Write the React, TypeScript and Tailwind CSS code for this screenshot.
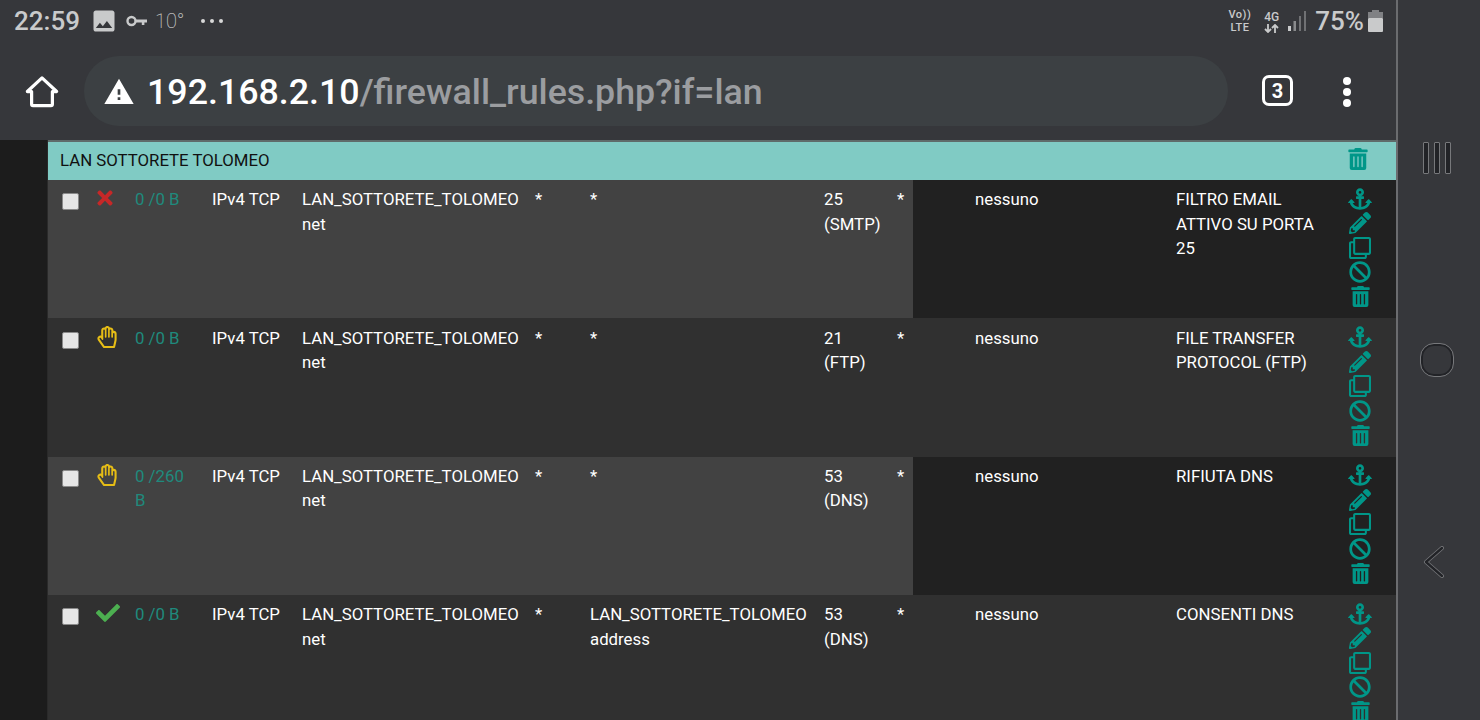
import { FaAnchor, FaBan, FaCheck, FaPencilAlt, FaRegClone, FaRegHandPaper, FaTimes, FaTrashAlt } from 'react-icons/fa';
import { MdImage, MdWarning } from 'react-icons/md';

type Rule = {
  action: 'block' | 'reject' | 'pass';
  states: string;
  dest: string[];
  port: string[];
  descr: string;
  highlight: boolean;
};

const rules: Rule[] = [
  { action: 'block', states: '0 /0 B', dest: ['*'], port: ['25', '(SMTP)'], descr: 'FILTRO EMAIL ATTIVO SU PORTA 25', highlight: true },
  { action: 'reject', states: '0 /0 B', dest: ['*'], port: ['21', '(FTP)'], descr: 'FILE TRANSFER PROTOCOL (FTP)', highlight: false },
  { action: 'reject', states: '0 /260 B', dest: ['*'], port: ['53', '(DNS)'], descr: 'RIFIUTA DNS', highlight: true },
  { action: 'pass', states: '0 /0 B', dest: ['LAN_SOTTORETE_TOLOMEO', 'address'], port: ['53', '(DNS)'], descr: 'CONSENTI DNS', highlight: false },
];

function ActionIcon({ action }: { action: Rule['action'] }) {
  if (action === 'block') return <FaTimes className="ml-[-2px] mt-[-1px] text-[#c62828]" size={22} />;
  if (action === 'reject') return <FaRegHandPaper className="mt-[-1px] text-[#e6bd16]" size={22} />;
  return <FaCheck className="mt-[-2px] text-[#4caf50]" size={24} />;
}

function RuleRow({ rule }: { rule: Rule }) {
  const left = rule.highlight ? 'bg-[#424242]' : 'bg-[#303030]';
  const right = rule.highlight ? 'bg-[#212121]' : 'bg-[#303030]';
  return (
    <div className="flex h-[138.33px] text-[16.8px] leading-[24.5px] text-white">
      <div className={`flex w-[865px] shrink-0 pt-[7.3px] ${left}`}>
        <div className="w-[48px] shrink-0 pl-[14px] pt-[6px]">
          <div className="h-[17px] w-[17px] rounded-[2px] border border-[#8a8a8a] bg-[#e6e6e6]" />
        </div>
        <div className="w-[39px] shrink-0 pt-[1px]">
          <ActionIcon action={rule.action} />
        </div>
        <div className="w-[77px] shrink-0 pr-[18px] text-[#1f8a7d]">{rule.states}</div>
        <div className="w-[90px] shrink-0">IPv4 TCP</div>
        <div className="w-[233px] shrink-0">
          <div>LAN_SOTTORETE_TOLOMEO</div>
          <div>net</div>
        </div>
        <div className="w-[55px] shrink-0">*</div>
        <div className="w-[234px] shrink-0">
          {rule.dest.map((line) => (
            <div key={line}>{line}</div>
          ))}
        </div>
        <div className="w-[73px] shrink-0">
          {rule.port.map((line) => (
            <div key={line}>{line}</div>
          ))}
        </div>
        <div className="w-[16px] shrink-0">*</div>
      </div>
      <div className={`flex flex-1 pt-[7.3px] ${right}`}>
        <div className="w-[263px] shrink-0 pl-[62px]">nessuno</div>
        <div className="w-[172px] shrink-0 pr-[18px]">{rule.descr}</div>
        <div className="ml-[1px] mt-[-1px] flex w-[22px] flex-col items-center text-[#009688]">
          <div className="flex h-[24.6px] items-center"><FaAnchor size={24} /></div>
          <div className="flex h-[24.6px] items-center"><FaPencilAlt size={22} /></div>
          <div className="flex h-[24.6px] items-center"><FaRegClone size={22} /></div>
          <div className="flex h-[24.6px] items-center"><FaBan size={22} /></div>
          <div className="flex h-[24.6px] items-center"><FaTrashAlt size={21} /></div>
        </div>
      </div>
    </div>
  );
}

function StatusBar() {
  return (
    <div className="flex h-[42px] items-center justify-between pl-[14px] pr-[13px] text-[#c9cacb]">
      <div className="flex items-center">
        <span className="text-[26px] font-medium">22:59</span>
        <MdImage size={28} className="ml-[10px]" />
        <svg width="22" height="12" viewBox="0 0 22 12" fill="none" className="ml-[8px]">
          <circle cx="5.5" cy="6" r="4" stroke="#c9cacb" strokeWidth="2.4" />
          <path d="M10 4.6h11v2.8h-2.6V10h-2.6V7.4H10z" fill="#c9cacb" />
        </svg>
        <span className="ml-[7px] text-[20px] font-thin text-[#e4e4e4]">10°</span>
        <span className="ml-[16px] flex gap-[5px]">
          <i className="h-[4px] w-[4px] rounded-full bg-[#d8d8d8]" />
          <i className="h-[4px] w-[4px] rounded-full bg-[#d8d8d8]" />
          <i className="h-[4px] w-[4px] rounded-full bg-[#d8d8d8]" />
        </span>
      </div>
      <div className="flex items-center">
        <div className="text-center text-[11px] font-medium leading-[13px] tracking-[0.5px]">
          <div>Vo))</div>
          <div>LTE</div>
        </div>
        <div className="ml-[13px] flex flex-col items-center">
          <span className="text-[12px] font-medium leading-[14px]">4G</span>
          <svg width="15" height="9" viewBox="0 0 15 9" fill="none" stroke="#c9cacb" strokeWidth="1.8">
            <path d="M4 0v8M1 5l3 3 3-3" />
            <path d="M11 9V1M8 4l3-3 3 3" />
          </svg>
        </div>
        <svg width="20" height="22" viewBox="0 0 20 22" className="ml-[9px]">
          <rect x="0" y="16" width="3" height="5" fill="#c9cacb" />
          <rect x="5.5" y="11" width="2.5" height="10" fill="#8a8b8d" />
          <rect x="11" y="6" width="2" height="15" fill="#707174" />
          <rect x="16" y="1" width="2" height="20" fill="#707174" />
        </svg>
        <span className="ml-[7px] text-[26px] font-medium">75%</span>
        <svg width="15" height="22" viewBox="0 0 15 22" className="ml-[4px]">
          <rect x="4" y="0" width="7" height="3" fill="#808184" />
          <rect x="0" y="2" width="15" height="6" fill="#808184" />
          <rect x="0" y="8" width="15" height="14" rx="1" fill="#c9cacb" />
        </svg>
      </div>
    </div>
  );
}

function AddressBar() {
  return (
    <div className="flex h-[98px] items-start">
      <svg width="34" height="34" viewBox="0 0 36 36" fill="none" stroke="white" strokeWidth="3.4" strokeLinejoin="round" className="ml-[25px] mt-[33px] shrink-0">
        <path d="M2.5 17.5 18 3l15.5 14.5H29V31a1.5 1.5 0 0 1-1.5 1.5h-19A1.5 1.5 0 0 1 7 31V17.5z" />
      </svg>
      <div className="ml-[25px] mt-[14px] flex h-[70px] w-[1144px] shrink-0 items-center rounded-full bg-[#3c4043] pl-[19px]">
        <MdWarning size={32} className="mt-[1px] text-white" />
        <span className="ml-[12px] mt-[3px] text-[35.75px] font-medium text-white">192.168.2.10</span>
        <span className="mt-[3px] text-[35.75px] font-medium text-[#9b9da0]">/firewall_rules.php?if=lan</span>
      </div>
      <div className="ml-[34px] mt-[33px] flex h-[31px] w-[31px] items-center justify-center rounded-[7px] border-[3px] border-white text-[20px] font-bold text-white">
        3
      </div>
      <div className="ml-[50px] mt-[35px] flex flex-col gap-[3px]">
        <i className="h-[8px] w-[8px] rounded-full bg-white" />
        <i className="h-[8px] w-[8px] rounded-full bg-white" />
        <i className="h-[8px] w-[8px] rounded-full bg-white" />
      </div>
    </div>
  );
}

function NavBar() {
  return (
    <div className="flex w-[84px] shrink-0 flex-col items-center border-l-2 border-[#6b6c6f] bg-[#36373b] pt-[142px]">
      <div className="ml-[-4px] flex gap-[5px]">
        <i className="h-[32px] w-[6px] rounded-[1px] border border-[#77787b] bg-[#222327]" />
        <i className="h-[32px] w-[6px] rounded-[1px] border border-[#77787b] bg-[#222327]" />
        <i className="h-[32px] w-[6px] rounded-[1px] border border-[#77787b] bg-[#222327]" />
      </div>
      <div className="ml-[-4px] mt-[170px] h-[32px] w-[32px] rounded-[13px] border-2 border-[#222327] outline outline-1 outline-[#77787b]" />
      <svg width="24" height="32" viewBox="0 0 24 32" fill="none" className="ml-[-11px] mt-[170px]">
        <path d="M20 2 4 16l16 14" stroke="#77787b" strokeWidth="4" strokeLinecap="round" strokeLinejoin="round" />
        <path d="M20 2 4 16l16 14" stroke="#222327" strokeWidth="2.4" strokeLinecap="round" strokeLinejoin="round" />
      </svg>
    </div>
  );
}

export default function App() {
  return (
    <div className="flex h-[720px] w-[1480px] overflow-hidden bg-[#1c1c1c] font-['Roboto',sans-serif]">
      <div className="flex w-[1396px] shrink-0 flex-col">
        <div className="h-[140px] shrink-0 bg-[#36373b]">
          <StatusBar />
          <AddressBar />
        </div>
        <div className="flex flex-1 overflow-hidden">
          <div className="w-[48px] shrink-0 border-r border-[#2a2a2a] bg-[#1c1c1c]" />
          <div className="flex-1 overflow-hidden border-t-2 border-[#5f6b6a]">
            <div className="flex h-[38px] items-center justify-between bg-[#80cbc4] pl-[12px] pr-[27px] text-[16.8px] text-[#111]">
              <span>LAN SOTTORETE TOLOMEO</span>
              <FaTrashAlt size={22} className="mt-[-4px] text-[#009688]" />
            </div>
            {rules.map((rule) => (
              <RuleRow key={rule.descr} rule={rule} />
            ))}
          </div>
        </div>
      </div>
      <NavBar />
    </div>
  );
}
